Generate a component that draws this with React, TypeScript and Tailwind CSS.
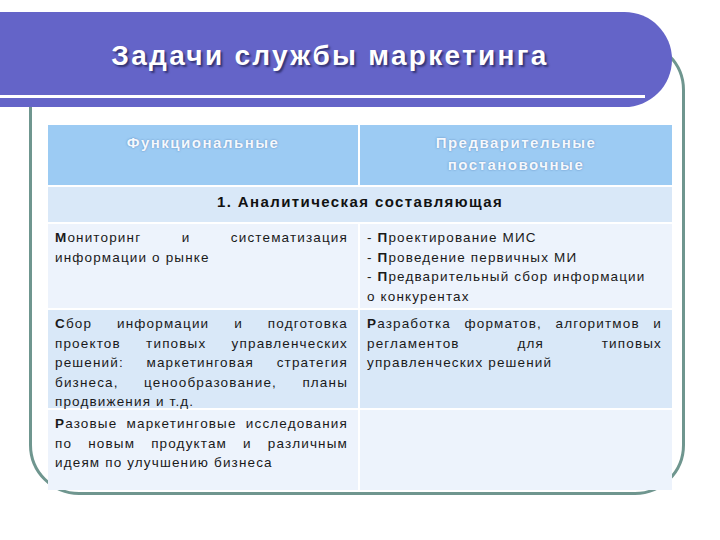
import type { ReactNode } from "react"

const font = { fontFamily: '"Liberation Sans", Arial, sans-serif' }

const Line = ({ children, last }: { children: ReactNode; last?: boolean }) => (
  <span className={last ? "block" : "block [text-align-last:justify]"}>{children}</span>
)

const Cell = ({ children, tone }: { children?: ReactNode; tone: "light" | "mid" }) => (
  <div
    className={`${tone === "mid" ? "bg-[#d9e8f8]" : "bg-[#edf3fc]"} pl-[7px] pr-[10px] pt-[4px] text-[13.5px] leading-[19.5px] tracking-[1.15px] text-[#1a1a1a]`}
  >
    {children}
  </div>
)

export default function App() {
  return (
    <div className="relative h-[540px] w-[720px] overflow-hidden bg-white" style={font}>
      {/* decorative frame behind the slide */}
      <div className="absolute left-[29px] top-[40px] h-[455px] w-[656px] rounded-[50px] border-[3px] border-[#6f968f]" />

      <div className="relative flex flex-col pt-[12px]">
        {/* title bar */}
        <div className="relative flex h-[95px] w-[672px] items-center justify-center rounded-r-[48px] bg-[#6464c8] pb-[8px] pr-[12px]">
          <h1 className="text-[28px] font-bold tracking-[2.3px] text-white [text-shadow:2px_2px_2px_rgba(20,20,60,0.6)]">
            Задачи службы маркетинга
          </h1>
          <div className="absolute bottom-[9px] left-0 h-[3px] w-[645px] bg-white" />
        </div>

        {/* table */}
        <div className="ml-[48px] mt-[18px] grid w-[624px] grid-cols-[310px_312px] grid-rows-[60px_35px_84px_98px_80px] gap-[2px] bg-white">
          <div className="bg-[#9ccbf3] pt-[7px] text-center text-[15px] font-bold leading-[22px] tracking-[1.5px] text-[#f4f8fd] [text-shadow:0_0_2px_rgba(70,110,165,0.75)]">
            Функциональные
          </div>
          <div className="bg-[#9ccbf3] pt-[7px] text-center text-[15px] font-bold leading-[22px] tracking-[1.5px] text-[#f4f8fd] [text-shadow:0_0_2px_rgba(70,110,165,0.75)]">
            Предварительные
            <br />
            постановочные
          </div>

          <div className="col-span-2 flex items-center justify-center bg-[#d9e8f8] pb-[4px] text-[15px] font-bold tracking-[1.4px] text-[#111]">
            1. Аналитическая составляющая
          </div>

          <Cell tone="light">
            <Line>
              <b>М</b>ониторинг и систематизация
            </Line>
            <Line last>информации о рынке</Line>
          </Cell>
          <Cell tone="light">
            <Line last>
              - <b>П</b>роектирование МИС
            </Line>
            <Line last>
              - <b>П</b>роведение первичных МИ
            </Line>
            <Line last>
              - <b>П</b>редварительный сбор информации
            </Line>
            <Line last>о конкурентах</Line>
          </Cell>

          <Cell tone="mid">
            <Line>
              <b>С</b>бор информации и подготовка
            </Line>
            <Line>проектов типовых управленческих</Line>
            <Line>решений: маркетинговая стратегия</Line>
            <Line>бизнеса, ценообразование, планы</Line>
            <Line last>продвижения и т.д.</Line>
          </Cell>
          <Cell tone="mid">
            <Line>
              <b>Р</b>азработка форматов, алгоритмов и
            </Line>
            <Line>регламентов для типовых</Line>
            <Line last>управленческих решений</Line>
          </Cell>

          <Cell tone="light">
            <Line>
              <b>Р</b>азовые маркетинговые исследования
            </Line>
            <Line>по новым продуктам и различным</Line>
            <Line last>идеям по улучшению бизнеса</Line>
          </Cell>
          <Cell tone="light" />
        </div>
      </div>
    </div>
  )
}
